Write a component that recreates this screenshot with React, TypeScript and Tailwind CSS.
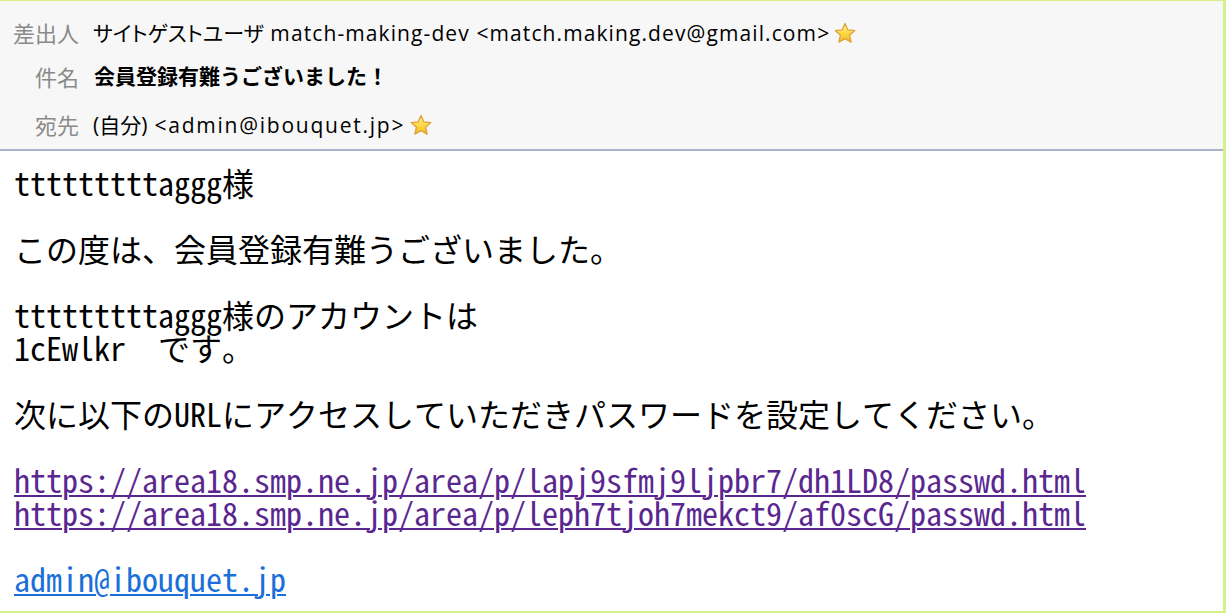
import React from "react";

function Star() {
  return (
    <svg width="24" height="23" viewBox="0 0 24 23" className="inline-block shrink-0">
      <defs>
        <linearGradient id="sg" x1="0" y1="0" x2="0" y2="1">
          <stop offset="0" stopColor="#fff3a0" />
          <stop offset="0.55" stopColor="#fdd843" />
          <stop offset="1" stopColor="#f5b524" />
        </linearGradient>
      </defs>
      <path
        d="M12 1.5 L14.9 7.9 L21.8 8.6 L16.6 13.2 L18.1 20.1 L12 16.6 L5.9 20.1 L7.4 13.2 L2.2 8.6 L9.1 7.9 Z"
        fill="url(#sg)"
        stroke="#dea236"
        strokeWidth="1.3"
        strokeLinejoin="round"
      />
    </svg>
  );
}

const headFont = {
  fontFamily: '"Open Sans", "Noto Sans CJK JP", sans-serif',
  fontFeatureSettings: '"palt"',
};

export default function App() {
  return (
    <div className="w-[1226px] h-[613px] overflow-hidden bg-white border-t border-r-[3px] border-b-2 border-[#d6f18c] flex flex-col">
      <div
        className="h-[150px] shrink-0 bg-[#f7f7f7] border-b-2 border-[#a8b5c7] flex flex-col pt-[10px] text-[21px] text-black"
        style={headFont}
      >
        <div className="h-[46px] flex items-center">
          <div className="w-[79px] text-right text-[#8a8a8a] text-[22px]">差出人</div>
          <div className="ml-[14px] flex items-center gap-[3px] whitespace-pre">
            <span>
              サイトゲストユーザ
              <span className="tracking-[1.1px]"> match-making-dev &lt;match.making.dev@gmail.com&gt;</span>
            </span>
            <Star />
          </div>
        </div>
        <div className="h-[44px] flex items-center">
          <div className="w-[79px] text-right text-[#8a8a8a] text-[22px]">件名</div>
          <div className="ml-[15px] font-bold text-[21px]" style={{ fontFeatureSettings: "normal" }}>
            会員登録有難うございました！
          </div>
        </div>
        <div className="h-[52px] pt-[4px] flex items-center">
          <div className="w-[79px] text-right text-[#8a8a8a] text-[22px]">宛先</div>
          <div className="ml-[14px] flex items-center gap-[4px] whitespace-pre">
            <span>
              (自分)<span className="tracking-[1.75px]"> &lt;admin@ibouquet.jp&gt;</span>
            </span>
            <Star />
          </div>
        </div>
      </div>
      <div
        className="pl-[14px] pt-[15px] text-[32px] leading-[33px] text-black whitespace-pre"
        style={{ fontFamily: '"Noto Sans Mono CJK JP", "Noto Sans CJK JP", "Liberation Mono", monospace' }}
      >
        <div>tttttttttaggg様</div>
        <div>&nbsp;</div>
        <div>この度は、会員登録有難うございました。</div>
        <div>&nbsp;</div>
        <div>tttttttttaggg様のアカウントは</div>
        <div>1cEwlkr　です。</div>
        <div>&nbsp;</div>
        <div>次に以下のURLにアクセスしていただきパスワードを設定してください。</div>
        <div>&nbsp;</div>
        <div>
          <a href="#" className="text-[#5a2790] underline decoration-2 underline-offset-2">
            https://area18.smp.ne.jp/area/p/lapj9sfmj9ljpbr7/dh1LD8/passwd.html
          </a>
        </div>
        <div>
          <a href="#" className="text-[#5a2790] underline decoration-2 underline-offset-2">
            https://area18.smp.ne.jp/area/p/leph7tjoh7mekct9/af0scG/passwd.html
          </a>
        </div>
        <div>&nbsp;</div>
        <div>
          <a href="#" className="text-[#1a6fd8] underline decoration-2 underline-offset-2">
            admin@ibouquet.jp
          </a>
        </div>
      </div>
    </div>
  );
}
